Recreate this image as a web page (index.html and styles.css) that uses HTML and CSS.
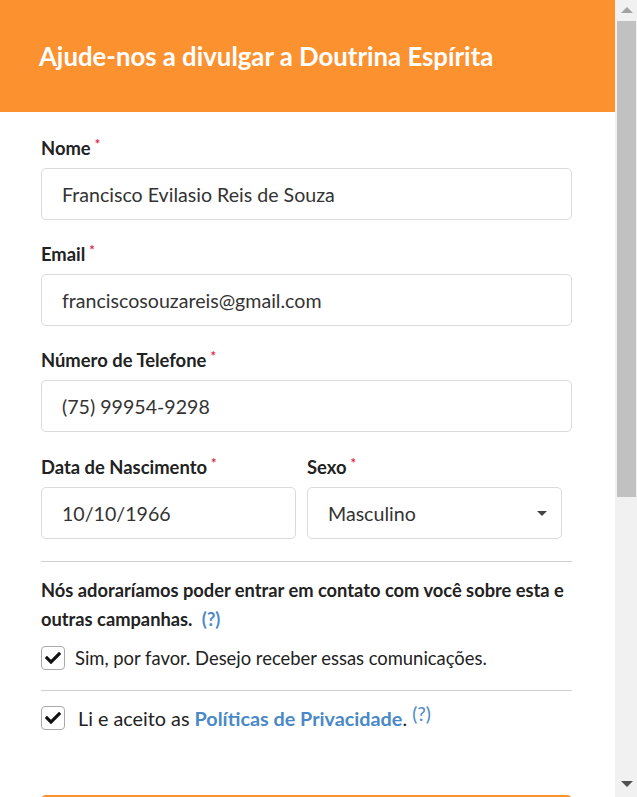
FILE: index.html
```html
<!DOCTYPE html>
<html lang="pt-BR">
<head>
<meta charset="utf-8">
<title>Ajude-nos a divulgar a Doutrina Espírita</title>
<link rel="stylesheet" href="styles.css">
</head>
<body>
<div class="page">
  <main class="content">
    <header class="header">
      <h1 class="title">Ajude-nos a divulgar a Doutrina Espírita</h1>
    </header>
    <form class="form">
      <div class="field">
        <label class="label">Nome<span class="req">*</span></label>
        <div class="input">Francisco Evilasio Reis de Souza</div>
      </div>
      <div class="field">
        <label class="label">Email<span class="req">*</span></label>
        <div class="input">franciscosouzareis@gmail.com</div>
      </div>
      <div class="field field-wide">
        <label class="label">Número de Telefone<span class="req">*</span></label>
        <div class="input">(75) 99954-9298</div>
      </div>
      <div class="row">
        <div class="field field-last">
          <label class="label">Data de Nascimento<span class="req">*</span></label>
          <div class="input">10/10/1966</div>
        </div>
        <div class="field field-last">
          <label class="label">Sexo<span class="req">*</span></label>
          <div class="input select"><span>Masculino</span><span class="caret"></span></div>
        </div>
      </div>
      <hr class="rule rule-first">
      <p class="note">Nós adoraríamos poder entrar em contato com você sobre esta e outras campanhas. <span class="help">(?)</span></p>
      <div class="check-row">
        <span class="box"><svg viewBox="0 0 512 512" width="16" height="16"><path d="M173.898 439.404l-166.4-166.4c-9.997-9.997-9.997-26.206 0-36.204l36.203-36.204c9.997-9.998 26.207-9.998 36.204 0L192 312.69 432.095 72.596c9.997-9.997 26.207-9.997 36.204 0l36.203 36.204c9.997 9.997 9.997 26.206 0 36.204l-294.4 294.401c-9.998 9.997-26.207 9.997-36.204-.001z"/></svg></span>
        <span class="check-text">Sim, por favor. Desejo receber essas comunicações.</span>
      </div>
      <hr class="rule rule-second">
      <div class="check-row check-row-big">
        <span class="box"><svg viewBox="0 0 512 512" width="16" height="16"><path d="M173.898 439.404l-166.4-166.4c-9.997-9.997-9.997-26.206 0-36.204l36.203-36.204c9.997-9.998 26.207-9.998 36.204 0L192 312.69 432.095 72.596c9.997-9.997 26.207-9.997 36.204 0l36.203 36.204c9.997 9.997 9.997 26.206 0 36.204l-294.4 294.401c-9.998 9.997-26.207 9.997-36.204-.001z"/></svg></span>
        <span class="check-text-big">Li e aceito as <a class="link">Políticas de Privacidade</a><span class="dot">.</span> <span class="help help-up">(?)</span></span>
      </div>
      <div class="button">Enviar</div>
    </form>
  </main>
  <div class="scrollbar">
    <span class="arrow arrow-up"></span>
    <span class="thumb"></span>
    <span class="track"></span>
    <span class="arrow arrow-down"></span>
  </div>
</div>
</body>
</html>
```
FILE: styles.css
```css
* { box-sizing: border-box; }
html, body { margin: 0; padding: 0; height: 100%; overflow: hidden; background: #fff; }
body { font-family: Lato, "Open Sans", "Liberation Sans", sans-serif; color: #222; }

.page { display: flex; height: 797px; width: 637px; }
.content { width: 615px; flex: none; overflow: hidden; }

.header {
  height: 112px;
  background: #fb912f;
  display: flex;
  align-items: center;
  padding-left: 39px;
}
.title {
  margin: 0;
  color: #fff;
  font-size: 25.75px;
  font-weight: 700;
}

.form { padding: 26px 43px 0 41px; }

.field { margin-bottom: 24px; }
.field-wide { margin-bottom: 25px; }
.field-last { margin-bottom: 0; }
.label {
  display: block;
  height: 20px;
  font-size: 18.4px;
  font-weight: 700;
  line-height: 20px;
  margin-bottom: 10px;
  color: #222;
}
.req {
  color: #e0294a;
  font-size: 13px;
  vertical-align: top;
  position: relative;
  top: -4px;
  margin-left: 4px;
  font-weight: 700;
}
.input {
  height: 52px;
  border: 1px solid #dadada;
  border-radius: 5px;
  padding: 0 20px;
  display: flex;
  align-items: center;
  font-size: 19.6px;
  color: #333;
}
.select { justify-content: space-between; }
.caret {
  width: 0; height: 0;
  border-left: 5px solid transparent;
  border-right: 5px solid transparent;
  border-top: 5px solid #444;
  margin-right: -6px;
}

.row { display: grid; grid-template-columns: 255px 255px; column-gap: 11px; }

.rule { border: 0; border-top: 1px solid #cfcfcf; margin: 0; }
.rule-first { margin-top: 22px; }
.rule-second { margin-top: 20px; }

.note {
  margin: 14px 0 0;
  font-size: 18.3px;
  font-weight: 700;
  line-height: 29px;
  color: #222;
}
.help { color: #4a89c8; margin-left: 5px; }

.check-row { display: flex; align-items: center; gap: 10px; margin-top: 12px; }
.check-row-big { margin-top: 15px; gap: 13px; }
.box {
  width: 24px; height: 24px;
  flex: none;
  border: 1px solid #a9a9a9;
  border-radius: 4px;
  background: #fff;
  display: flex; align-items: center; justify-content: center;
}
.box svg { fill: #111; }
.check-text { font-size: 18.4px; color: #222; }
.check-text-big { font-size: 19.8px; color: #222; }
.link { color: #4a89c8; font-weight: 700; }
.dot { color: #222; }
.help-up { margin-left: 0; vertical-align: top; position: relative; top: -4px; font-size: 19px; }

.button {
  margin-top: 65px;
  height: 52px;
  border-radius: 5px;
  background: #fb912f;
  color: #fff;
  display: flex; align-items: center; justify-content: center;
  font-weight: 700;
  font-size: 18px;
}

.scrollbar {
  width: 22px;
  flex: none;
  background: #f1f1f1;
  display: flex;
  flex-direction: column;
  align-items: center;
  padding: 0 1px 0 2px;
}
.arrow { width: 0; height: 0; flex: none; border-left: 6px solid transparent; border-right: 6px solid transparent; }
.arrow-up { border-bottom: 6px solid #a3a3a3; margin-top: 7px; }
.arrow-down { border-top: 6px solid #505050; margin-bottom: 10px; }
.thumb { width: 19px; height: 476px; background: #c1c1c1; margin-top: 8px; flex: none; }
.track { flex: 1; }
```
